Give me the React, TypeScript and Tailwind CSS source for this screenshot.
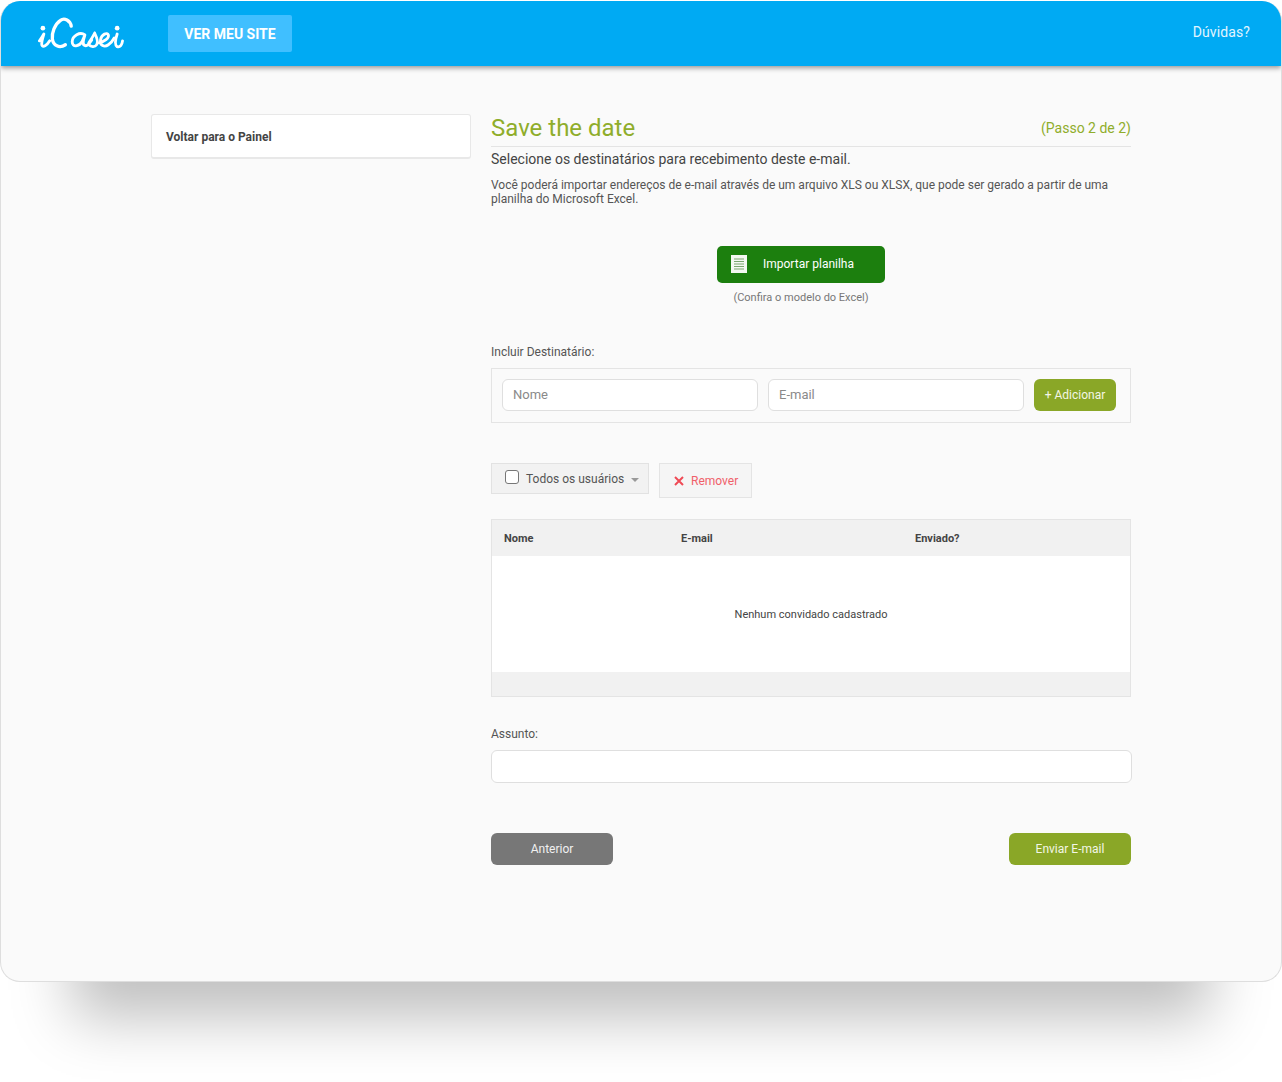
const Logo = () => (
  <svg width="86" height="36" viewBox="0 0 88 36" fill="none" stroke="#fff" strokeLinecap="round" strokeLinejoin="round" aria-label="iCasei">
    <circle cx="5" cy="12" r="2.4" fill="#fff" stroke="none" />
    <path d="M1.5 25C3 23 5 20 6 18C5 22 3 27 4 29.5C5 32 9 30 12 25" strokeWidth="2.9" />
    <path d="M34 10C33 4 27 1 23 4C17 8 14 17 14.7 23C15.5 30 22 33 28 29" strokeWidth="3.4" />
    <path d="M48 19C43 15 35 20 35 26C35 32 42 31 45 26L48 19C46 25 45 30 49 30C51 30 53 27 55 24" strokeWidth="2.9" />
    <path d="M58 17C56 21 54 24 52 27M58 17C60 21 62 26 60 29C58 32 54 31 52 29" strokeWidth="2.8" />
    <path d="M62 27C68 26 73 22 72 19C71 16 65 18 64 24C63 30 68 32 72 29C75 27 77 24 78 22" strokeWidth="2.9" />
    <circle cx="81" cy="12" r="2.4" fill="#fff" stroke="none" />
    <path d="M81 18C79 24 78 29 81 31C84 32 86 29 86.5 25" strokeWidth="2.9" />
  </svg>
);

const SheetIcon = () => (
  <svg width="16" height="18" viewBox="0 0 16 18" aria-hidden="true">
    <rect width="16" height="18" fill="#f4f8f2" />
    <path d="M3 4h10M3 6.5h10M3 9h10M3 11.5h10M3 14h10" stroke="#7aa56f" strokeWidth="1.2" />
  </svg>
);

const inputClass =
  "rounded-md border border-[#dfdfdf] bg-white px-[10px] text-[13px] text-[#444] outline-none placeholder:text-[#8a8a8a]";

export default function App() {
  return (
    <div className="h-[1082px] w-[1282px] overflow-hidden bg-white pt-px font-['Roboto',sans-serif] text-[#444]">
      <div className="h-[981px] overflow-hidden rounded-[20px] border-b border-l border-r border-[#dedede] bg-[#fafafa] shadow-[0_108px_56px_-72px_rgba(0,0,0,0.25)]">
        <header className="relative flex h-[65px] items-center bg-[#00aaf3] pl-[37px] pr-[31px] shadow-[0_2px_5px_rgba(0,0,0,0.4)]">
          <Logo />
          <a className="ml-[44px] flex h-[37px] w-[124px] items-center justify-center rounded-[2px] bg-[#40bfff] text-sm font-bold text-white">
            VER MEU SITE
          </a>
          <a className="ml-auto -mt-[3px] text-sm tracking-[0.1px] text-[#e2f5ff]">Dúvidas?</a>
        </header>

        <div className="flex gap-5 pl-[150px] pt-12">
          <aside className="w-[320px]">
            <div className="flex h-[45px] items-center rounded-[3px] border border-b-2 border-[#e8e8e8] bg-white px-[14px] pt-px text-xs font-bold text-[#444]">
              Voltar para o Painel
            </div>
          </aside>

          <main className="w-[640px]">
            <div className="flex h-[33px] items-center justify-between border-b border-[#e4e4e4] pb-[4px] text-[#8fad2b]">
              <h1 className="text-2xl leading-none">Save the date</h1>
              <span className="text-sm">(Passo 2 de 2)</span>
            </div>
            <p className="mt-[4px] text-sm leading-[16px] text-[#444]">
              Selecione os destinatários para recebimento deste e-mail.
            </p>
            <p className="mt-[11px] text-xs leading-[14px] text-[#555]">
              Você poderá importar endereços de e-mail através de um arquivo XLS ou XLSX, que pode ser gerado a partir de uma
              planilha do Microsoft Excel.
            </p>

            <div className="mt-[40px] flex w-[620px] flex-col items-center">
              <button className="flex h-[37px] w-[168px] items-center rounded-[5px] bg-[#1c7f0e] pb-px pl-[14px] text-xs text-white">
                <SheetIcon />
                <span className="ml-[16px]">Importar planilha</span>
              </button>
              <span className="mt-2 text-[11px] leading-[13px] text-[#777]">(Confira o modelo do Excel)</span>
            </div>

            <label className="mt-[41px] block text-xs leading-[14px] text-[#555]">Incluir Destinatário:</label>
            <div className="mt-[9px] flex h-[55px] items-center gap-[10px] border border-[#e4e4e4] px-[10px] pb-[2px]">
              <input className={`${inputClass} h-[32px] w-[256px]`} placeholder="Nome" readOnly />
              <input className={`${inputClass} h-[32px] w-[256px]`} placeholder="E-mail" readOnly />
              <button className="h-[32px] w-[82px] rounded-md bg-[#8aa727] text-xs text-[#f3f6e6]">+ Adicionar</button>
            </div>

            <div className="mt-[40px] flex items-start gap-[10px]">
              <div className="flex h-[31px] w-[158px] items-center border border-[#e2e2e2] bg-[#f2f2f2] pl-[13px] text-xs text-[#555]">
                <span className="-mt-1 h-[14px] w-[14px] rounded-[3px] border border-[#777] bg-white" />
                <span className="ml-[7px]">Todos os usuários</span>
                <span className="ml-[7px] mt-[3px] border-x-[4px] border-t-[4px] border-x-transparent border-t-[#999]" />
              </div>
              <button className="flex h-[35px] w-[93px] items-center border border-[#e4e4e4] bg-[#f5f5f5] pl-[13px] text-xs text-[#f0606a]">
                <svg width="12" height="12" viewBox="0 0 12 12" aria-hidden="true">
                  <path d="M2 2l8 8M10 2l-8 8" stroke="#ef4a55" strokeWidth="2" />
                </svg>
                <span className="ml-[6px]">Remover</span>
              </button>
            </div>

            <div className="mt-[21px] border border-[#e4e4e4]">
              <div className="grid h-[36px] grid-cols-[177px_234px_1fr] items-center bg-[#f1f1f1] pl-3 pt-[2px] text-[11px] font-bold text-[#444]">
                <span>Nome</span>
                <span>E-mail</span>
                <span>Enviado?</span>
              </div>
              <div className="flex h-[116px] items-center justify-center bg-white pt-[2px] text-[11px] text-[#444]">
                Nenhum convidado cadastrado
              </div>
              <div className="h-[24px] bg-[#f1f1f1]" />
            </div>

            <label className="mt-[30px] block text-xs leading-[14px] text-[#555]">Assunto:</label>
            <input className={`${inputClass} mt-[9px] h-[33px] w-[641px]`} readOnly />

            <div className="mt-[50px] flex justify-between">
              <button className="h-[32px] w-[122px] rounded-md bg-[#777] text-xs text-[#f0f0f0]">Anterior</button>
              <button className="h-[32px] w-[122px] rounded-md bg-[#8aa727] text-xs text-[#f3f6e6]">Enviar E-mail</button>
            </div>
          </main>
        </div>
      </div>
    </div>
  );
}
